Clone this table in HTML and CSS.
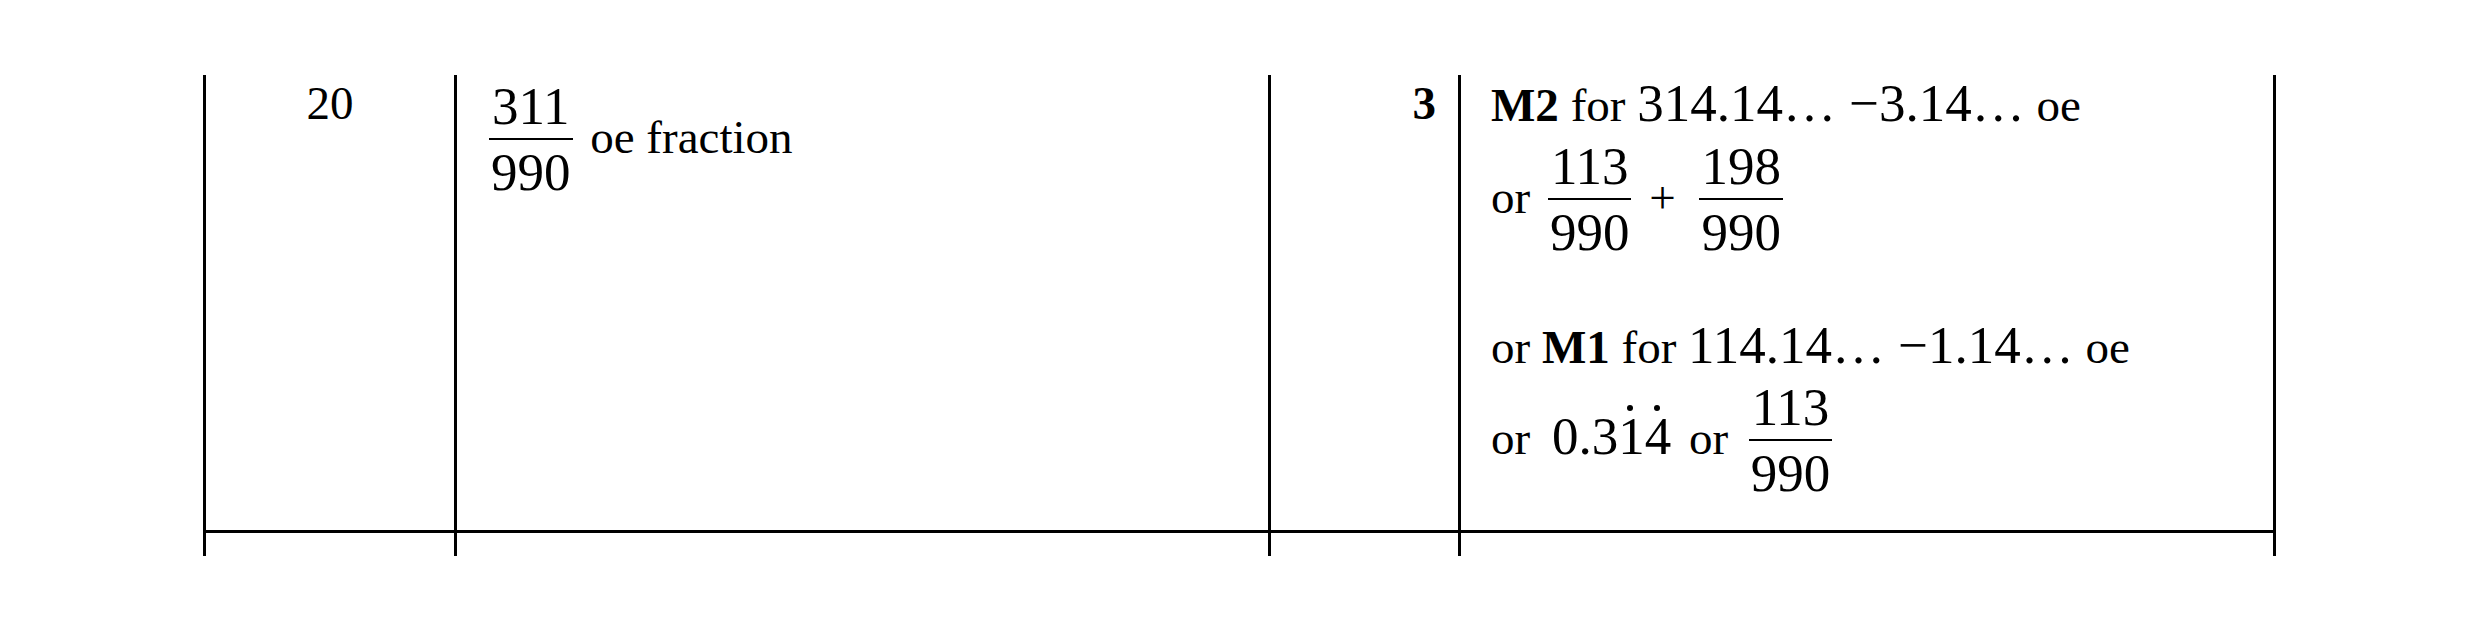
FILE: index.html
```html
<!DOCTYPE html>
<html>
<head>
<meta charset="utf-8">
<link rel="stylesheet" href="styles.css">
</head>
<body>
<div class="table">
  <div class="row main">
    <div class="cell c1">20</div>
    <div class="cell c2">
      <span class="frac"><span class="num">311</span><span class="den">990</span></span>
      <span class="txt">oe fraction</span>
    </div>
    <div class="cell c3"><b>3</b></div>
    <div class="cell c4">
      <div class="line l1"><b>M2</b> for <span class="m">314.14… −3.14…</span> oe</div>
      <div class="line l2">or <span class="frac"><span class="num">113</span><span class="den">990</span></span> <span class="plus">+</span> <span class="frac"><span class="num">198</span><span class="den">990</span></span></div>
      <div class="line l3">or <b>M1</b> for <span class="m">114.14… −1.14…</span> oe</div>
      <div class="line l4">or <span class="m dec">0.3<span class="dot">1</span><span class="dot">4</span></span> or <span class="frac"><span class="num">113</span><span class="den">990</span></span></div>
    </div>
  </div>
  <div class="row next">
    <div class="cell"></div>
    <div class="cell"></div>
    <div class="cell"></div>
    <div class="cell"></div>
  </div>
</div>
</body>
</html>
```

FILE: styles.css
```css
html, body {
  margin: 0;
  padding: 0;
  background: #fff;
}
body {
  width: 2480px;
  height: 631px;
  overflow: hidden;
  font-family: "Liberation Serif", "Times New Roman", serif;
  font-size: 47px;
  color: #000;
}
.table {
  margin-left: 203px;
  margin-top: 75px;
  width: 2073px;
}
.row {
  display: grid;
  grid-template-columns: 251px 814px 190px 815px;
  border-right: 3px solid #000;
}
.row.main {
  height: 455px;
  border-bottom: 3px solid #000;
}
.row.next {
  height: 23px;
}
.cell {
  border-left: 3px solid #000;
  line-height: 57px;
}
.c1 {
  text-align: center;
}
.c2 {
  padding-left: 32px;
  padding-top: 6px;
}
.c3 {
  text-align: right;
  padding-right: 22px;
}
.c4 {
  padding-left: 30px;
}
.frac {
  display: inline-flex;
  flex-direction: column;
  vertical-align: 29px;
  text-align: center;
  font-size: 53px;
  margin: 0 6px;
}
.num {
  line-height: 50px;
  border-bottom: 2px solid #000;
  padding: 0 2px 7px;
}
.den {
  line-height: 50px;
  padding: 7px 2px 0;
}
.c2 .frac {
  margin-left: 0;
  margin-right: 6px;
}
.m {
  font-size: 53px;
}
.dec {
  margin-left: 10px;
  margin-right: 6px;
}
.l4 .frac {
  margin-left: 9px;
}
.plus {
  margin-right: 6px;
}
.line {
  white-space: nowrap;
}
.l2 {
  margin-top: 7px;
}
.l3 {
  margin-top: 60px;
}
.l4 {
  margin-top: 6px;
}
.dot {
  position: relative;
}
.dot::before {
  content: "";
  position: absolute;
  left: 50%;
  top: -2px;
  width: 6px;
  height: 6px;
  margin-left: -4px;
  border-radius: 50%;
  background: #000;
}
```
